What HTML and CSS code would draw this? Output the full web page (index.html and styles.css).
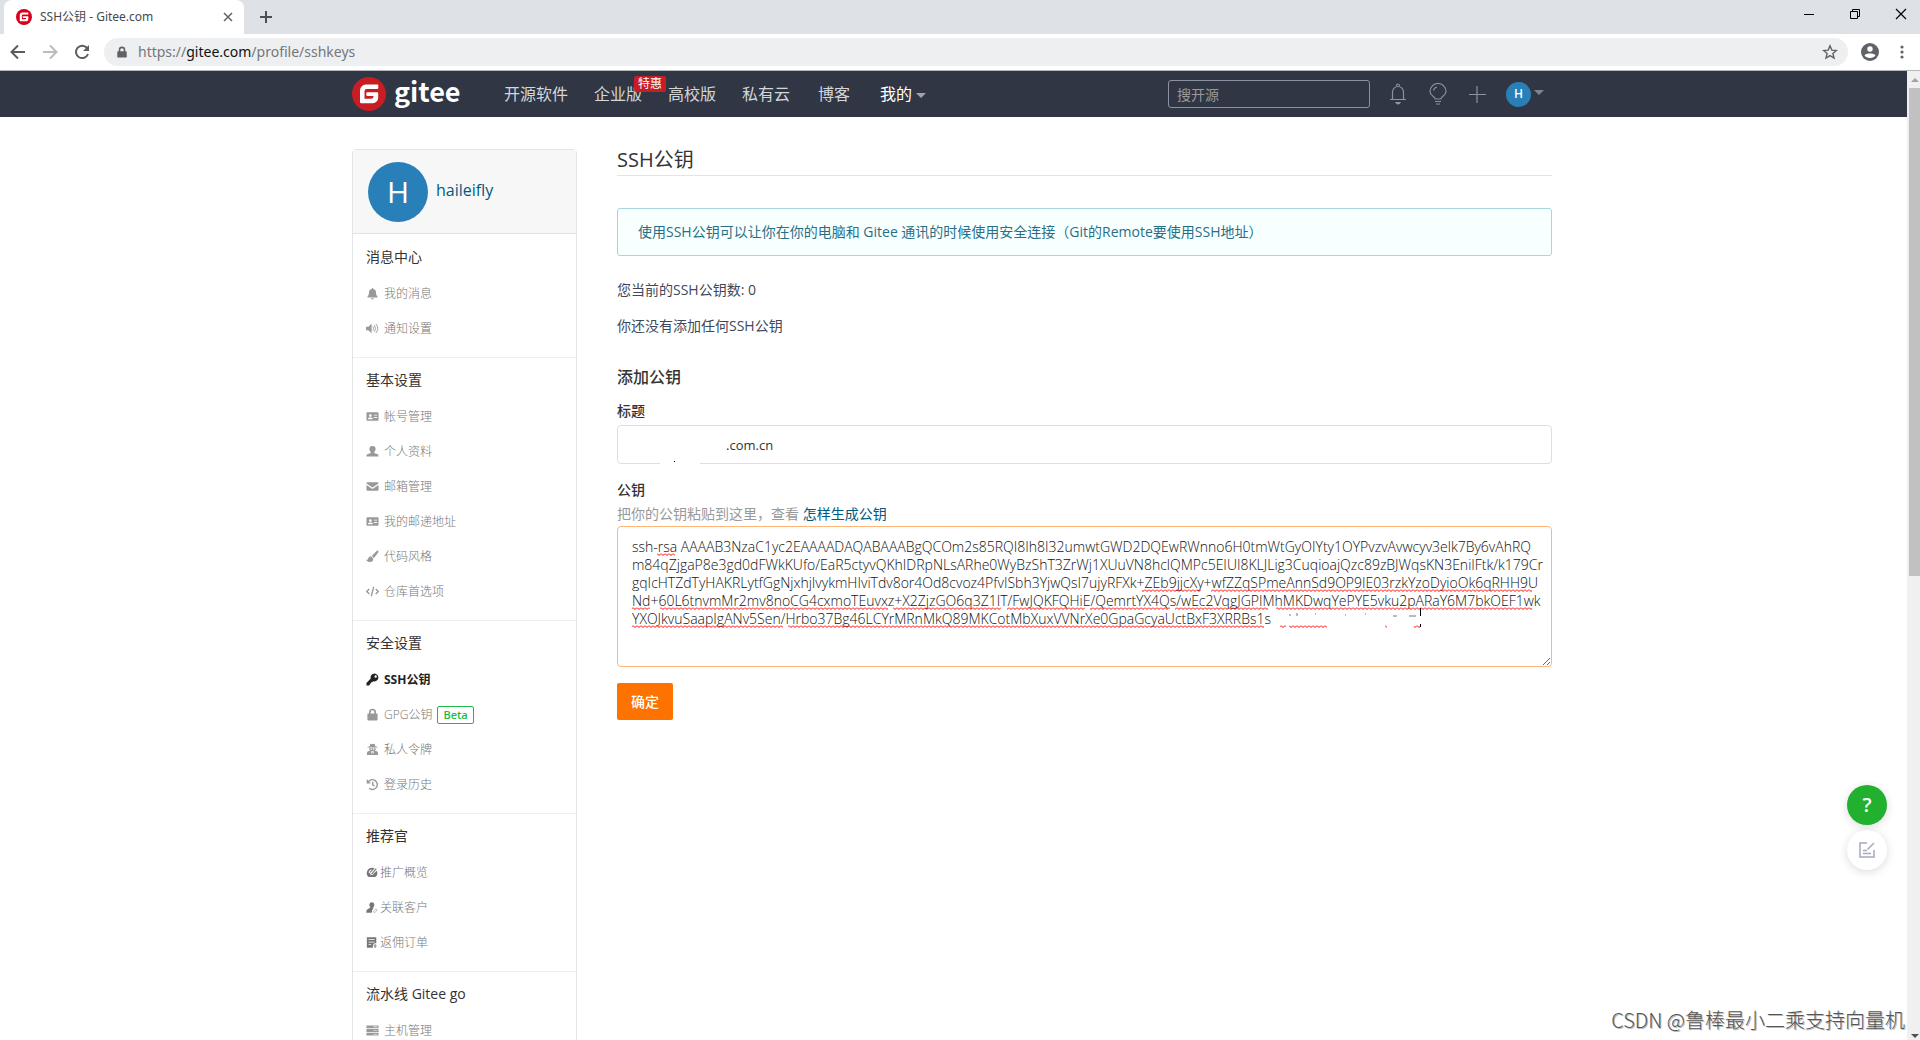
FILE: index.html
```html
<!DOCTYPE html>
<html lang="zh-CN">
<head>
<meta charset="utf-8">
<title>SSH公钥 - Gitee.com</title>
<link rel="stylesheet" href="styles.css">
</head>
<body>
<svg class="sprite" aria-hidden="true">
  <symbol id="logo-g" viewBox="0 0 34 34"><circle cx="17" cy="17" r="17"/><path d="M25.500 7.500H14a6 6 0 0 0-6 6V25a1.200 1.200 0 0 0 1.200 1.200h11.600a5.400 5.400 0 0 0 5.400-5.400v-4.600a1 1 0 0 0-1-1H15.300a1 1 0 0 0-1 1V18a1 1 0 0 0 1 1h6.200v.500a2.300 2.300 0 0 1-2.300 2.300h-6.700V14.200a2.300 2.300 0 0 1 2.300-2.300h10.700a.800.800 0 0 0 .800-.800V8.300a.800.800 0 0 0-.800-.800z" fill="#fff"/></symbol>
  <symbol id="i-bell" viewBox="0 0 14 14"><path d="M7 1.200a.900.900 0 0 0-.900.900C4.100 2.500 3.200 4 3.200 6c0 2.500-.7 3.300-1.500 4.100-.5.500-.2 1.300.6 1.300h9.400c.8 0 1.100-.8.600-1.300-.8-.8-1.500-1.600-1.500-4.100 0-2-.9-3.500-2.900-3.900A.900.900 0 0 0 7 1.200zM5.500 12h3a1.500 1.500 0 0 1-3 0z"/></symbol>
  <symbol id="i-sound" viewBox="0 0 14 14"><path d="M0 5h2.500L6 2v10L2.500 9H0z"/><path d="M7.500 5q1.400 2 0 4M9 3.500q2.700 3.500 0 7M10.700 2.200q4 4.800 0 9.600" fill="none" stroke="currentColor"/></symbol>
  <symbol id="i-card" viewBox="0 0 14 14"><path fill-rule="evenodd" d="M1.500 2.500h11a1 1 0 0 1 1 1v7a1 1 0 0 1-1 1h-11a1 1 0 0 1-1-1v-7a1 1 0 0 1 1-1zm3.200 2a1.500 1.500 0 1 0 0 3 1.500 1.500 0 0 0 0-3zM2 10h5.400q0-2-1.500-2H3.500Q2 8 2 10zm6.500-5v1H12V5zm0 2.500v1H12v-1z"/></symbol>
  <symbol id="i-user" viewBox="0 0 14 14"><path d="M7 1a3.300 3.300 0 0 1 3.300 3.500C10.200 6 9.400 7 8.700 7.600c0 .7.200 1 .8 1.200l2.500.8c1.100.3 1.500 1 1.500 2.900H.500c0-1.900.4-2.600 1.500-2.900l2.500-.8c.6-.2.8-.5.8-1.200C4.600 7 3.800 6 3.700 4.500A3.300 3.300 0 0 1 7 1z"/></symbol>
  <symbol id="i-mail" viewBox="0 0 14 14"><path d="M.500 3.500a1 1 0 0 1 1-1h11a1 1 0 0 1 1 1v.4L7 8.200.500 3.900zm0 1.800L7 9.600l6.500-4.300v5.200a1 1 0 0 1-1 1h-11a1 1 0 0 1-1-1z"/></symbol>
  <symbol id="i-brush" viewBox="0 0 14 14"><path d="M12.900.900c.6.500.6 1.100.2 1.700L8.600 8.500 6.200 6.400l5.200-5.400q.8-.6 1.500-.1zM5.500 7l2.400 2.200c.1 2.500-1.500 3.800-4 3.800-2 0-3.300-1-3.600-2.700 1.500.6 1.800-.3 2.200-1.500C2.900 7.500 4.200 6.700 5.500 7z"/></symbol>
  <symbol id="i-code" viewBox="0 0 14 14"><path d="M3.500 4.200.800 7l2.700 2.800M10.500 4.200 13.200 7l-2.700 2.800M8.300 2 5.700 12" fill="none" stroke="currentColor" stroke-width="1.500"/></symbol>
  <symbol id="i-key" viewBox="0 0 14 14"><path fill-rule="evenodd" d="M9.200.500a4.300 4.300 0 1 1-1.500 8.400L6.700 10H5.500v1.300H4.200V12.600L3.300 13.500H.500v-2.800L5.100 6A4.300 4.300 0 0 1 9.200.500zm1.200 1.900a1.300 1.300 0 1 0 0 2.600 1.300 1.300 0 0 0 0-2.600z"/></symbol>
  <symbol id="i-lock" viewBox="0 0 14 14"><path fill-rule="evenodd" d="M3.200 6V4.500a3.800 3.800 0 0 1 7.600 0V6h.7a1 1 0 0 1 1 1v5.500a1 1 0 0 1-1 1h-9a1 1 0 0 1-1-1V7a1 1 0 0 1 1-1zm1.800 0h4V4.500a2 2 0 0 0-4 0z"/></symbol>
  <symbol id="i-spy" viewBox="0 0 14 14"><path fill-rule="evenodd" d="M1.500 4.200 4 3.500 4.700.900c.7-.5 1.500.1 2.300.1s1.600-.6 2.300-.1L10 3.500l2.500.7v.7h-11zM3.300 5.700h7.400q0 1.900-1.400 2.500l2.400.8q1.300.6 1.300 2v2H1v-2q0-1.400 1.300-2l2.400-.8Q3.300 7.600 3.300 5.700zM5 6.200v1h1.500v-1zm2.500 0v1H9v-1zM5.500 9l.7 3 .6-2h.4l.6 2 .7-3z"/></symbol>
  <symbol id="i-history" viewBox="0 0 14 14"><path d="M1.500 2v3.200h3.300M2 5a5.300 5.300 0 1 1 1.400 6.100M7.200 4v3.300l2 1.300" fill="none" stroke="currentColor" stroke-width="1.500"/></symbol>
  <symbol id="i-gauge" viewBox="0 0 14 14"><path fill-rule="evenodd" d="M7 1.500a6.300 6.300 0 0 0-4.700 10.300q.4.500 1 .5h7.400q.6 0 1-.5A6.300 6.300 0 0 0 12.600 5L8.700 8.500A2 2 0 1 1 6.300 6L10 2.200A6 6 0 0 0 7 1.500zM3 7.500h1.300Q4.500 5 6.500 4.300V3.200Q3.300 4 3 7.500z"/><path d="m6.500 9 5.500-6.500" stroke="currentColor" stroke-width="1.300"/></symbol>
  <symbol id="i-client" viewBox="0 0 14 14"><path d="M6.800.800c2 0 3 1.300 2.900 3.200C9.600 5.800 8.500 7 8 7.500l.8.600L7.200 10l-.5 3H.300c0-2.700.8-4 3.600-5.100.7-.3 1-.9.9-1.500Q3.700 5.200 3.900 3.500 4.200.8 6.800.8z"/><path d="m8.500 11.800 3-3.200 1.700 1.400-3 3z" fill="none" stroke="currentColor" opacity=".6"/></symbol>
  <symbol id="i-order" viewBox="0 0 14 14"><path fill-rule="evenodd" d="M1 1h11v7h-2L8 10v3H1zm2 2.200v1h7v-1zM3 6v1h7V6zm0 3v1h3V9z"/><path d="m10.700 8.500 2.300 3h-1.300V13H9.500v-1.500H8.300z" opacity=".7"/></symbol>
  <symbol id="i-server" viewBox="0 0 14 14"><path fill-rule="evenodd" d="M.500 1.500h13v3H.500zm0 4h13v3H.500zm0 4h13v3H.500zM8 2.700v.700h4v-.700zm0 4v.700h4v-.700zm0 4v.700h4v-.700z"/></symbol>
</svg>

<div class="tabbar">
  <div class="tab">
    <svg class="favicon" viewBox="0 0 34 34"><use href="#logo-g"/></svg>
    <span class="tab-title">SSH公钥 - Gitee.com</span>
    <button class="bare" aria-label="关闭标签页"><svg width="10" height="10" viewBox="0 0 10 10"><path d="m1 1 8 8M9 1 1 9" stroke="#5f6368" stroke-width="1.500"/></svg></button>
  </div>
  <button class="bare new-tab" aria-label="新标签页"><svg width="12" height="12" viewBox="0 0 12 12"><path d="M6 0v12M0 6h12" stroke="#4b4e52" stroke-width="2"/></svg></button>
  <div class="window-buttons">
    <button class="bare" aria-label="最小化"><svg width="12" height="12" viewBox="0 0 12 12"><path d="M1 6.500h10" stroke="#000"/></svg></button>
    <button class="bare" aria-label="还原"><svg width="12" height="12" viewBox="0 0 12 12"><path d="M1.500 3.500h7v7h-7zM3.500 3.500v-2h7v7h-2" fill="none" stroke="#000"/></svg></button>
    <button class="bare" aria-label="关闭"><svg width="12" height="12" viewBox="0 0 12 12"><path d="m1 1 10 10M11 1 1 11" stroke="#000" stroke-width="1.200"/></svg></button>
  </div>
</div>
<div class="toolbar">
  <button class="bare" aria-label="后退"><svg width="16" height="16" viewBox="0 0 16 16"><path d="M15 8H2M8 1.500 1.500 8 8 14.500" fill="none" stroke="#5a5d61" stroke-width="2"/></svg></button>
  <button class="bare" aria-label="前进"><svg width="16" height="16" viewBox="0 0 16 16"><path d="M1 8h13M8 1.500 14.500 8 8 14.500" fill="none" stroke="#babcbe" stroke-width="2"/></svg></button>
  <button class="bare" aria-label="重新加载"><svg width="16" height="16" viewBox="0 0 16 16"><path d="M13 4A6.200 6.200 0 1 0 14 10" fill="none" stroke="#5a5d61" stroke-width="2"/><path d="M15 1v6H9z" fill="#5a5d61"/></svg></button>
  <div class="omnibox">
    <svg width="12" height="12" viewBox="0 0 14 14" fill="#5f6368"><use href="#i-lock"/></svg>
    <span class="url">https://<b>gitee.com</b>/profile/sshkeys</span>
    <button class="bare" aria-label="收藏"><svg width="16" height="16" viewBox="0 0 16 16"><path d="m8 1.800 1.800 4.300 4.600.4-3.500 3 1.100 4.600L8 11.600l-4 2.500 1.100-4.600-3.500-3 4.600-.4z" fill="none" stroke="#5f6368" stroke-width="1.400"/></svg></button>
  </div>
  <button class="bare account" aria-label="个人资料"><svg width="18" height="18" viewBox="0 0 18 18"><circle cx="9" cy="9" r="9" fill="#5f6368"/><circle cx="9" cy="6" r="2.700" fill="#fff"/><path d="M3.500 12.300C5 9.800 13 9.800 14.500 12.300 12.500 15.900 5.500 15.900 3.500 12.300z" fill="#fff"/></svg></button>
  <button class="bare" aria-label="菜单"><svg width="4" height="14" viewBox="0 0 4 14" fill="#5f6368"><circle cx="2" cy="2" r="1.600"/><circle cx="2" cy="7" r="1.600"/><circle cx="2" cy="12" r="1.600"/></svg></button>
</div>

<div class="viewport">
  <div class="page">
    <header class="site-header">
      <div class="container header-row">
        <a class="logo" href="#"><svg width="34" height="34" viewBox="0 0 34 34"><use href="#logo-g"/></svg><span>gitee</span></a>
        <nav class="nav">
          <a href="#">开源软件</a>
          <a href="#" class="has-badge">企业版<span class="badge">特惠</span></a>
          <a href="#">高校版</a>
          <a href="#">私有云</a>
          <a href="#" class="nav-blog">博客</a>
          <a href="#" class="nav-mine">我的<i class="caret"></i></a>
        </nav>
        <input class="search" type="search" placeholder="搜开源" aria-label="搜开源">
        <div class="tools">
          <a href="#" aria-label="通知"><svg width="20" height="22" viewBox="0 0 20 22"><path d="M2 16.500h16M4.500 16V9a5.500 5.500 0 0 1 11 0v7M8.500 3q0-2 1.500-2t1.500 2" fill="none" stroke="#8c92a4" stroke-width="1.200"/><path d="M7 19h6q-1 2.500-3 2.500T7 19z" fill="#8c92a4"/></svg></a>
          <a href="#" aria-label="动态"><svg width="20" height="22" viewBox="0 0 20 22"><path d="M7.200 16C7.200 13.500 2 12.500 2 8.500a8 8 0 0 1 16 0C18 12.500 12.800 13.500 12.800 16zM7 18.500h6M8 21h4M5.500 7.500q.7-3 3.500-3.500" fill="none" stroke="#8c92a4" stroke-width="1.200"/></svg></a>
          <a href="#" aria-label="新建"><svg width="18" height="18" viewBox="0 0 18 18"><path d="M9 1v17M1 9.500h17" stroke="#8c92a4" stroke-width="1.200"/></svg></a>
          <a href="#" class="me" aria-label="haileifly"><span class="avatar avatar-small">H</span><i class="caret"></i></a>
        </div>
      </div>
    </header>

    <div class="container layout">
      <aside class="sidebar">
        <a class="profile" href="#"><span class="avatar">H</span><span>haileifly</span></a>
        <section class="group">
          <h2>消息中心</h2>
          <ul>
            <li><a href="#"><svg><use href="#i-bell"/></svg>我的消息</a></li>
            <li><a href="#"><svg><use href="#i-sound"/></svg>通知设置</a></li>
          </ul>
        </section>
        <section class="group">
          <h2>基本设置</h2>
          <ul>
            <li><a href="#"><svg><use href="#i-card"/></svg>帐号管理</a></li>
            <li><a href="#"><svg><use href="#i-user"/></svg>个人资料</a></li>
            <li><a href="#"><svg><use href="#i-mail"/></svg>邮箱管理</a></li>
            <li><a href="#"><svg><use href="#i-card"/></svg>我的邮递地址</a></li>
            <li><a href="#"><svg><use href="#i-brush"/></svg>代码风格</a></li>
            <li><a href="#"><svg><use href="#i-code"/></svg>仓库首选项</a></li>
          </ul>
        </section>
        <section class="group">
          <h2>安全设置</h2>
          <ul>
            <li><a href="#" class="active"><svg><use href="#i-key"/></svg>SSH公钥</a></li>
            <li><a href="#"><svg><use href="#i-lock"/></svg>GPG公钥<span class="beta">Beta</span></a></li>
            <li><a href="#"><svg><use href="#i-spy"/></svg>私人令牌</a></li>
            <li><a href="#"><svg><use href="#i-history"/></svg>登录历史</a></li>
          </ul>
        </section>
        <section class="group group-tight">
          <h2>推荐官</h2>
          <ul>
            <li><a href="#"><svg><use href="#i-gauge"/></svg>推广概览</a></li>
            <li><a href="#"><svg><use href="#i-client"/></svg>关联客户</a></li>
            <li><a href="#"><svg><use href="#i-order"/></svg>返佣订单</a></li>
          </ul>
        </section>
        <section class="group">
          <h2>流水线 Gitee go</h2>
          <ul>
            <li><a href="#"><svg><use href="#i-server"/></svg>主机管理</a></li>
          </ul>
        </section>
      </aside>

      <main class="main">
        <h1>SSH公钥</h1>
        <div class="notice">使用SSH公钥可以让你在你的电脑和 Gitee 通讯的时候使用安全连接（Git的Remote要使用SSH地址）</div>
        <p>您当前的SSH公钥数: 0</p>
        <p>你还没有添加任何SSH公钥</p>
        <form>
          <h2>添加公钥</h2>
          <label for="key-title">标题</label>
          <div class="field">
            <input id="key-title" class="text-input" type="text" value=".com.cn">
            <span class="smudge"></span>
          </div>
          <label for="key-body">公钥</label>
          <div class="hint">把你的公钥粘贴到这里，查看 <a href="#">怎样生成公钥</a></div>
          <div class="field">
            <textarea id="key-body" class="key-input" wrap="off" spellcheck="false">ssh-rsa AAAAB3NzaC1yc2EAAAADAQABAAABgQCOm2s85RQI8Ih8I32umwtGWD2DQEwRWnno6H0tmWtGyOIYty1OYPvzvAvwcyv3elk7By6vAhRQ
m84qZjgaP8e3gd0dFWkKUfo/EaR5ctyvQKhIDRpNLsARhe0WyBzShT3ZrWj1XUuVN8hclQMPc5EIUI8KLJLig3CuqioajQzc89zBJWqsKN3EniIFtk/k179Cr
gqIcHTZdTyHAKRLytfGgNjxhjIvykmHIviTdv8or4Od8cvoz4PfvISbh3YjwQsI7ujyRFXk+ZEb9jjcXy+wfZZqSPmeAnnSd9OP9IE03rzkYzoDyioOk6qRHH9U
Nd+60L6tnvmMr2mv8noCG4cxmoTEuvxz+X2ZjzGO6q3Z1IT/FwJQKFQHiE/QemrtYX4Qs/wEc2VqgJGPIMhMKDwqYePYE5vku2pARaY6M7bkOEF1wk
YXOJkvuSaapIgANv5Sen/Hrbo37Bg46LCYrMRnMkQ89MKCotMbXuxVVNrXe0GpaGcyaUctBxF3XRRBs1s</textarea>
            <svg class="spelling" width="920" height="110" viewBox="0 0 920 110" aria-hidden="true">
              <defs><pattern id="wave" width="4" height="3" patternUnits="userSpaceOnUse"><path d="M0 .500 2 2.500 4 .500" fill="none" stroke="#f00"/></pattern></defs>
              <g fill="url(#wave)">
                <path d="M40 27h18v3H40z"/>
                <path d="M525 63h59v3h-59zM594 63h321v3H594z"/>
                <path d="M15 81h18v3H15zM43 81h228v3H43zM276 81h108v3H276zM390 81h78v3h-78zM473 81h80v3h-80zM558 81h93v3h-93zM659 81h256v3H659z"/>
                <path d="M15 99h151v3H15zM171 99h476v3H171zM663 99h6v3h-6zM672 99h38v3h-38zM768 99h2v3h-2zM797 99h7v3h-7z"/>
              </g>
              <path d="M803.500 82v8M803.500 98v3" stroke="#000"/>
              <path d="M672 89h2M680 87v3M698 88h1M728 89h1M748 88h1M776 90h4M792 90h7" stroke="#777" fill="none"/>
            </svg>
          </div>
          <button class="submit" type="submit">确定</button>
        </form>
      </main>
    </div>

    <div class="floats">
      <button class="float float-help" aria-label="帮助">?</button>
      <button class="float" aria-label="反馈"><svg width="18" height="18" viewBox="0 0 18 18"><path d="M9 2H2v14h14V9M9.500 8.500 16 2M5 9.500h4M5 12.500h8" fill="none" stroke="#a5abbd" stroke-width="1.500"/></svg></button>
    </div>
    <div class="watermark">CSDN @鲁棒最小二乘支持向量机</div>
  </div>
  <div class="scrollbar" aria-hidden="true">
    <i class="arrow arrow-up"></i>
    <i class="thumb"></i>
    <i class="arrow arrow-down"></i>
  </div>
</div>
</body>
</html>
```
FILE: styles.css
```css
* { box-sizing: border-box; }

body {
  margin: 0;
  height: 100vh;
  display: flex;
  flex-direction: column;
  overflow: hidden;
  background: #fff;
  color: #40485b;
  font: 14px/20px "Open Sans", "Noto Sans CJK SC", sans-serif;
}

a { color: inherit; text-decoration: none; }
h1, h2, p, ul { margin: 0; padding: 0; font-weight: 400; }
ul { list-style: none; }
button, input, textarea { font: inherit; color: inherit; }
.sprite { display: none; }
.bare { display: flex; padding: 0; border: 0; background: none; }

/* Browser frame */
.tabbar {
  flex: none;
  display: flex;
  align-items: center;
  height: 34px;
  padding-left: 4px;
  background: #dee1e6;
}
.tab {
  display: flex;
  align-items: center;
  width: 240px;
  height: 34px;
  padding: 0 11px 0 12px;
  border-radius: 8px 8px 0 0;
  background: #fff;
}
.favicon { width: 16px; height: 16px; margin-right: 8px; fill: #d8001b; }
.tab-title { flex: 1; font-family: "Noto Sans", "Noto Sans CJK SC", sans-serif; font-size: 12px; color: #45494d; }
.new-tab { margin-left: 16px; }
.window-buttons { display: flex; gap: 34px; margin: 0 13px 6px auto; }
.toolbar {
  flex: none;
  display: flex;
  align-items: center;
  gap: 16px;
  height: 37px;
  padding: 0 16px 0 10px;
  border-bottom: 1px solid #b4b7b7;
  background: #fff;
}
.omnibox {
  flex: 1;
  display: flex;
  align-items: center;
  height: 28px;
  margin: 0 -3px 0 -2px;
  padding: 0 10px 0 12px;
  border-radius: 14px;
  background: #eeeff1;
}
.account { margin-right: 5px; }
.url { flex: 1; margin-left: 10px; font-family: "Noto Sans", sans-serif; color: #74777b; }
.url b { font-weight: 400; color: #111; }

/* Viewport */
.viewport { flex: 1; display: flex; min-height: 0; }
.page { position: relative; flex: 1; overflow: hidden; }
.container { width: 1200px; max-width: 100%; margin: 0 auto; }
.scrollbar {
  display: flex;
  flex-direction: column;
  align-items: center;
  justify-content: space-between;
  width: 13px;
  padding: 7px 0 2px 2px;
  background: #f0f0f0;
}
.thumb { width: 100%; height: 488px; margin: 6px 0 auto; background: #c1c1c1; }
.arrow { border: 4px solid transparent; }
.arrow-up { border-top: 0; border-bottom-color: #a3a3a3; }
.arrow-down { border-bottom: 0; border-top-color: #505050; }

/* Site header */
.site-header { padding-right: 3px; background: #303643; }
.header-row { display: flex; align-items: center; height: 46px; }
.logo { display: flex; gap: 8px; width: 152px; fill: #c71d23; color: #fff; }
.logo span { font: 700 27px/28px "Noto Sans CJK SC", sans-serif; }
.nav { display: flex; gap: 26px; font-size: 16px; color: #d5d6d9; }
.nav-blog { margin-left: 2px; }
.nav-mine { display: flex; align-items: center; margin-left: 4px; color: #fff; }
.has-badge { position: relative; }
.badge {
  position: absolute;
  left: 40px;
  top: -8px;
  width: 32px;
  border-radius: 2px;
  background: #c71d23;
  color: #fff;
  font-size: 12px;
  line-height: 16px;
  text-align: center;
}
.caret { margin: 3px 0 0 4px; border: 5px solid transparent; border-top-color: #a0a3ab; border-bottom: 0; }
.search {
  width: 202px;
  height: 28px;
  margin-left: auto;
  padding: 0 8px;
  border: 1px solid #8c92a4;
  border-radius: 3px;
  background: transparent;
  color: #fff;
}
.search::placeholder { color: #9a9a9c; }
.tools { display: flex; align-items: center; gap: 20px; margin: 0 8px 0 18px; }
.tools a, .tools svg { display: flex; }
.me { align-items: center; }
.me .caret { margin: -3px 0 0 3px; border-top-color: #7d8392; }
.avatar {
  display: flex;
  align-items: center;
  justify-content: center;
  width: 60px;
  height: 60px;
  border-radius: 50%;
  background: #2980b9;
  color: #fff;
  font-size: 30px;
}
.avatar-small { width: 25px; height: 25px; font-size: 12px; font-weight: 600; }

/* Layout */
.layout { display: flex; align-items: flex-start; gap: 40px; width: 1203px; padding: 32px 3px 0 0; }
.sidebar { width: 225px; border: 1px solid #e3e4e6; border-radius: 4px; }
.profile {
  display: flex;
  align-items: center;
  gap: 8px;
  height: 84px;
  padding: 0 15px;
  border-bottom: 1px solid #dfe3e9;
  background: #f7f7f8;
  color: #005980;
  font-size: 16px;
}
.profile span + span { padding-bottom: 4px; }
.group { padding: 3px 0 11px 13px; border-top: 1px solid #eeeeef; }
.profile + .group { border-top-color: transparent; }
.group h2 { color: #333; font-size: 14px; line-height: 38px; }
.group a {
  display: flex;
  align-items: center;
  gap: 5px;
  height: 35px;
  color: #777;
  font-size: 12px;
  font-weight: 300;
}
.group svg { width: 13px; height: 13px; fill: currentColor; color: #999; }
.group-tight a { gap: 2px; }
.group-tight svg { width: 12px; color: #777; }
.group .active, .group .active svg { color: #222; font-weight: 700; }
.beta {
  padding: 0 5px;
  border: 1px solid #21ba45;
  border-radius: 2px;
  color: #21ba45;
  font-size: 11px;
  font-weight: 600;
  line-height: 16px;
}

.main { flex: 1; min-width: 0; }
.main h1 {
  height: 27px;
  margin-bottom: 32px;
  border-bottom: 1px solid #e3e4e6;
  color: #333;
  font-size: 20px;
  line-height: 22px;
}
.notice {
  margin-bottom: 24px;
  padding: 13px 20px;
  border: 1px solid #a9d5de;
  border-radius: 3px;
  background: #f8ffff;
  color: #276f86;
  line-height: 20px;
}
.main p { margin-bottom: 16px; line-height: 20px; }
.main form { padding-top: 13px; color: #333; }
.main form h2 { margin-bottom: 12px; font-size: 16px; font-weight: 500; line-height: 24px; }
.main label { display: block; margin-bottom: 4px; font-weight: 500; line-height: 20px; }
.field { position: relative; display: flex; margin-bottom: 16px; }
.text-input {
  width: 100%;
  height: 39px;
  padding: 0 14px 0 108px;
  border: 1px solid #dce0e6;
  border-radius: 4px;
  font-size: 13px;
}
.smudge { position: absolute; left: 43px; bottom: 0; width: 40px; height: 3px; background: #fff; }
.smudge::before { content: ""; position: absolute; left: 14px; width: 1px; height: 1px; background: #000; }
.hint { color: #999; line-height: 20px; margin-bottom: 2px; }
.hint a { color: #005980; }
.key-input {
  display: block;
  width: 100%;
  height: 141px;
  padding: 11px 14px;
  border: 1px solid #ffb577;
  border-radius: 4px;
  outline: 0;
  overflow: hidden;
  color: #111;
  font-size: 14px;
  font-weight: 300;
  line-height: 18px;
}
.spelling { position: absolute; left: 0; top: 0; pointer-events: none; }
.submit {
  width: 56px;
  height: 37px;
  padding: 0;
  border: 0;
  border-radius: 2px;
  background: #fe7300;
  color: #fff;
  font-weight: 500;
}

/* Floating items */
.floats { position: absolute; right: 20px; bottom: 170px; display: flex; flex-direction: column; gap: 5px; }
.float {
  display: flex;
  align-items: center;
  justify-content: center;
  width: 40px;
  height: 40px;
  padding: 0;
  border: 0;
  border-radius: 50%;
  background: #fff;
  box-shadow: 0 2px 10px rgba(0, 0, 0, .14);
}
.float-help { background: #22b02f; color: #fff; font-size: 20px; font-weight: 600; }
.watermark {
  position: absolute;
  right: 2px;
  bottom: 6px;
  color: #555;
  font: 300 20px/28px "Noto Sans CJK SC", sans-serif;
  text-shadow: 1px 1px 0 #bbb;
}
```
